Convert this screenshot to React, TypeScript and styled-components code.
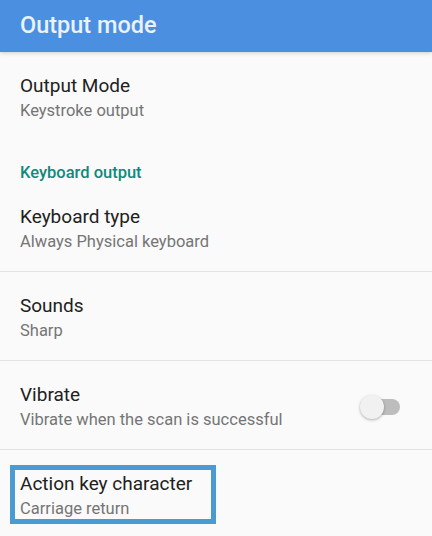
import React, {useState} from 'react';
import styled, {createGlobalStyle} from 'styled-components';

const GlobalStyle = createGlobalStyle`
  html, body {
    margin: 0;
    padding: 0;
    background: #fafafa;
    font-family: Roboto, "Noto Sans", sans-serif;
  }
`;

const Screen = styled.div`
  width: 432px;
  height: 536px;
  overflow: hidden;
  background: #fafafa;
`;

const AppBar = styled.header`
  height: 52px;
  display: flex;
  align-items: center;
  padding: 0 20px 2px;
  box-sizing: border-box;
  background: #4a8fe0;
  color: #eaf2fd;
  font-size: 23.5px;
  font-weight: 500;
  box-shadow: 0 1px 4px rgba(0, 0, 0, 0.18);
  position: relative;
  z-index: 1;
`;

const List = styled.div`
  display: flex;
  flex-direction: column;
`;

const Category = styled.div`
  padding: 23px 20px 0;
  font-size: 16.5px;
  line-height: 20px;
  font-weight: 500;
  color: #0e8a7c;
`;

const Row = styled.div<{$divider?: boolean}>`
  display: flex;
  align-items: center;
  padding: 22px 20px 18px;
  border-top: ${(p) => (p.$divider ? '1px solid #e2e2e2' : 'none')};
`;

const Texts = styled.div<{$highlight?: boolean}>`
  flex: 1;
  display: flex;
  flex-direction: column;
  gap: 2px;
  position: relative;

  &::after {
    content: '';
    display: ${(p) => (p.$highlight ? 'block' : 'none')};
    position: absolute;
    top: -7px;
    left: -10px;
    width: 196px;
    bottom: -4px;
    border: 5px solid #4a9bd1;
  }
`;

const Title = styled.div`
  font-size: 19px;
  line-height: 24px;
  color: #212121;
`;

const Summary = styled.div`
  font-size: 16.5px;
  line-height: 22px;
  color: #757575;
`;

const Switch = styled.button<{$on: boolean}>`
  position: relative;
  width: 40px;
  height: 26px;
  margin-right: 12px;
  padding: 0;
  border: none;
  background: none;
  display: flex;
  align-items: center;
  justify-content: flex-end;
  cursor: pointer;
`;

const Track = styled.span<{$on: boolean}>`
  width: 34px;
  height: 16px;
  border-radius: 8px;
  background: ${(p) => (p.$on ? '#80cbc4' : '#bdbdbd')};
`;

const Thumb = styled.span<{$on: boolean}>`
  position: absolute;
  top: 1px;
  left: ${(p) => (p.$on ? '16px' : '0')};
  width: 24px;
  height: 24px;
  border-radius: 50%;
  background: ${(p) => (p.$on ? '#009688' : '#f1f1f1')};
  box-shadow: 0 1px 3px rgba(0, 0, 0, 0.3);
`;

interface PrefProps {
  title: string;
  summary: string;
  divider?: boolean;
  highlight?: boolean;
  children?: React.ReactNode;
}

const Pref = ({title, summary, divider, highlight, children}: PrefProps) => (
  <Row $divider={divider}>
    <Texts $highlight={highlight}>
      <Title>{title}</Title>
      <Summary>{summary}</Summary>
    </Texts>
    {children}
  </Row>
);

const App = () => {
  const [vibrate, setVibrate] = useState(false);

  return (
    <Screen>
      <GlobalStyle />
      <AppBar>Output mode</AppBar>
      <List>
        <Pref title="Output Mode" summary="Keystroke output" />
        <Category>Keyboard output</Category>
        <Pref title="Keyboard type" summary="Always Physical keyboard" />
        <Pref title="Sounds" summary="Sharp" divider />
        <Pref title="Vibrate" summary="Vibrate when the scan is successful" divider>
          <Switch $on={vibrate} onClick={() => setVibrate(!vibrate)}>
            <Track $on={vibrate} />
            <Thumb $on={vibrate} />
          </Switch>
        </Pref>
        <Pref title="Action key character" summary="Carriage return" divider highlight />
      </List>
    </Screen>
  );
};

export default App;
